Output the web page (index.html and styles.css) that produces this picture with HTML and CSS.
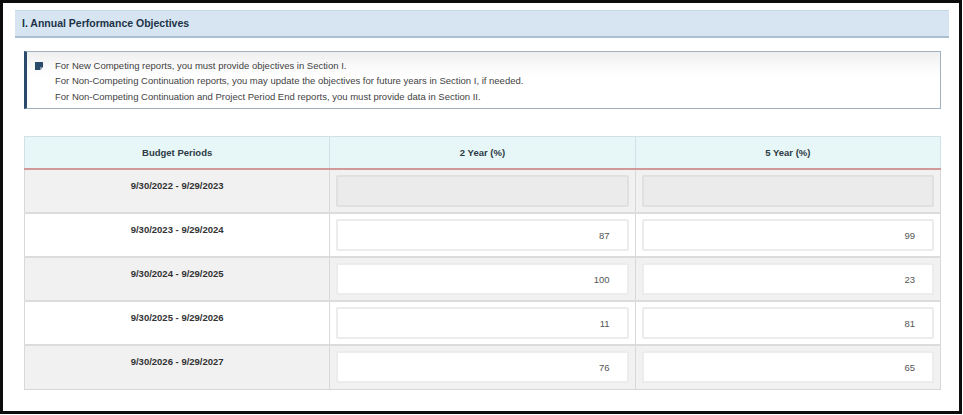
FILE: index.html
```html
<!DOCTYPE html>
<html lang="en">
<head>
    <meta charset="UTF-8">
    <meta name="viewport" content="width=device-width, initial-scale=1.0">
    <title>Annual Performance Objectives</title>
    <link rel="stylesheet" href="styles.css">
</head>
<body>

    <div class="frame">
        <div class="section">
            <div class="section-title">I. Annual Performance Objectives</div>

            <div class="section-body">
                <div class="notice">
                    <svg class="notice-icon" width="8" height="8" viewBox="0 0 8 8">
                        <path d="M0 0 H8 V5 L5 8 H0 Z" fill="#2b4b6b"/>
                        <path d="M5 8 V5 H8 Z" fill="#7f96ad"/>
                    </svg>
                    <div class="notice-text">
                        <div>For New Competing reports, you must provide objectives in Section I.</div>
                        <div>For Non-Competing Continuation reports, you may update the objectives for future years in Section I, if needed.</div>
                        <div>For Non-Competing Continuation and Project Period End reports, you must provide data in Section II.</div>
                    </div>
                </div>

                <table class="objectives">
                    <thead>
                        <tr>
                            <th>Budget Periods</th>
                            <th>2 Year (%)</th>
                            <th>5 Year (%)</th>
                        </tr>
                    </thead>
                    <tbody>
                        <tr class="alt">
                            <td class="period">9/30/2022 - 9/29/2023</td>
                            <td><input type="text" value="" disabled></td>
                            <td><input type="text" value="" disabled></td>
                        </tr>
                        <tr>
                            <td class="period">9/30/2023 - 9/29/2024</td>
                            <td><input type="text" value="87"></td>
                            <td><input type="text" value="99"></td>
                        </tr>
                        <tr class="alt">
                            <td class="period">9/30/2024 - 9/29/2025</td>
                            <td><input type="text" value="100"></td>
                            <td><input type="text" value="23"></td>
                        </tr>
                        <tr>
                            <td class="period">9/30/2025 - 9/29/2026</td>
                            <td><input type="text" value="11"></td>
                            <td><input type="text" value="81"></td>
                        </tr>
                        <tr class="alt">
                            <td class="period">9/30/2026 - 9/29/2027</td>
                            <td><input type="text" value="76"></td>
                            <td><input type="text" value="65"></td>
                        </tr>
                    </tbody>
                </table>
            </div>
        </div>
    </div>

</body>
</html>
```

FILE: styles.css
```css
/* Base */
body {
    margin: 0;
    font-family: "Liberation Sans", Arial, sans-serif;
    background: #fff;
}

.frame {
    box-sizing: border-box;
    width: 962px;
    height: 414px;
    border: 3px solid #0c0c0c;
    padding: 7px 10px 0 12px;
}

/* Section header */
.section-title {
    height: 25px;
    line-height: 25px;
    padding-left: 7px;
    background: #d6e5f1;
    border-top: 1px solid #c7d8e6;
    border-bottom: 2px solid #aabfd0;
    font-size: 10.5px;
    font-weight: bold;
    color: #1d3247;
}

.section-body {
    padding: 13px 8px 0 9px;
}

/* Notice box */
.notice {
    display: flex;
    align-items: flex-start;
    height: 56px;
    border: 1px solid #9fb0bf;
    border-left: 3px solid #2a4b6b;
    background: linear-gradient(#efefef 0, #fcfcfc 18px, #fff 26px);
    padding: 0 0 0 8px;
}

.notice-icon {
    margin-top: 10px;
    flex-shrink: 0;
}

.notice-text {
    padding: 6px 0 0 12px;
    font-size: 9.5px;
    line-height: 15.3px;
    color: #424242;
}

/* Table */
.objectives {
    width: 917px;
    margin-top: 27px;
    border-collapse: collapse;
    font-size: 9.5px;
    table-layout: fixed;
}

.objectives th {
    height: 31px;
    padding: 0;
    background: #e7f6f6;
    border: 1px solid #d3e0e6;
    border-bottom: 2px solid #d19a9a;
    color: #2c3a45;
    font-weight: bold;
    text-align: center;
}

.objectives tbody tr {
    height: 44px;
}

.objectives td {
    padding: 0 6px;
    border: 1px solid #d8d8d8;
    border-top: 2px solid #dcdcdc;
    vertical-align: middle;
}

.objectives td + td {
    border-left: 1px solid #d2dde3;
}

.objectives tr.alt td {
    background: #f1f1f1;
}

.objectives td.period {
    vertical-align: top;
    padding-top: 10px;
    text-align: center;
    font-weight: bold;
    color: #333;
}

.objectives input {
    box-sizing: border-box;
    display: block;
    width: 100%;
    height: 32px;
    padding: 0 17px 0 6px;
    border: 2px solid #ececec;
    border-radius: 2px;
    background: #fff;
    font-family: "Liberation Sans", Arial, sans-serif;
    font-size: 9.5px;
    color: #555;
    text-align: right;
}

.objectives input:disabled {
    background: #ebebec;
    border-color: #e0e0e0;
}
```
